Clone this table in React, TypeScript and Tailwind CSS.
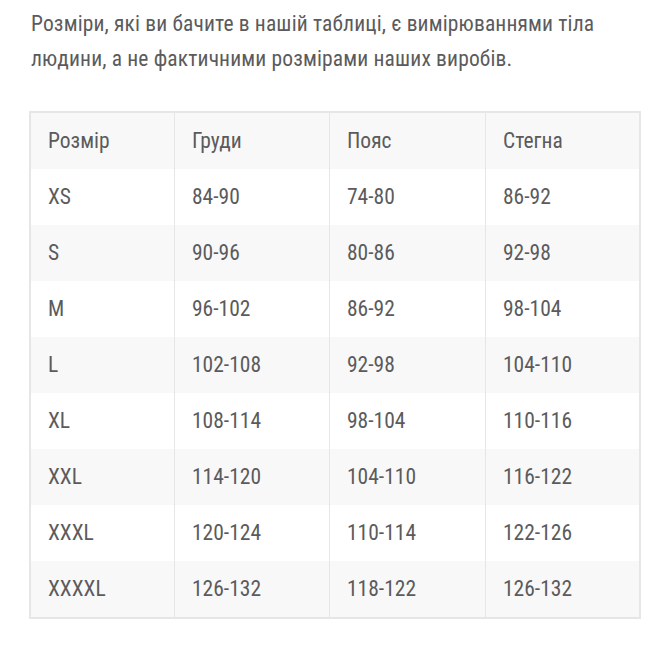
const rows = [
  ['XS', '84-90', '74-80', '86-92'],
  ['S', '90-96', '80-86', '92-98'],
  ['M', '96-102', '86-92', '98-104'],
  ['L', '102-108', '92-98', '104-110'],
  ['XL', '108-114', '98-104', '110-116'],
  ['XXL', '114-120', '104-110', '116-122'],
  ['XXXL', '120-124', '110-114', '122-126'],
  ['XXXXL', '126-132', '118-122', '126-132'],
];

const header = ['Розмір', 'Груди', 'Пояс', 'Стегна'];

const Row = ({ cells, shaded }: { cells: string[]; shaded: boolean }) => (
  <div className={`grid grid-cols-[143px_155px_156px_1fr] h-14 ${shaded ? 'bg-[#f8f8f8]' : 'bg-white'}`}>
    {cells.map((c, i) => (
      <div
        key={i}
        className={`flex items-center pl-[17px] ${i > 0 ? 'border-l border-[#e6e6e6]' : ''}`}
      >
        {c}
      </div>
    ))}
  </div>
);

export default function App() {
  return (
    <div
      className="bg-white w-[656px] h-[646px] px-[29px] pt-[6px] text-[#5b5b5d] text-[21.5px]"
      style={{ fontFamily: '"Roboto Condensed", "Liberation Sans Narrow", "DejaVu Sans Condensed", Roboto, sans-serif' }}
    >
      {/* Intro */}
      <p className="leading-[35px] pl-[2px] pr-[10px] tracking-[0.15px]">
        Розміри, які ви бачите в нашій таблиці, є вимірюваннями тіла людини, а не фактичними розмірами наших виробів.
      </p>

      {/* Size table */}
      <div className="mt-[35px] w-[612px] border-2 border-[#e6e6e6]">
        <Row cells={header} shaded={true} />
        {rows.map((r, i) => (
          <Row key={r[0]} cells={r} shaded={i % 2 === 1} />
        ))}
      </div>
    </div>
  );
}
